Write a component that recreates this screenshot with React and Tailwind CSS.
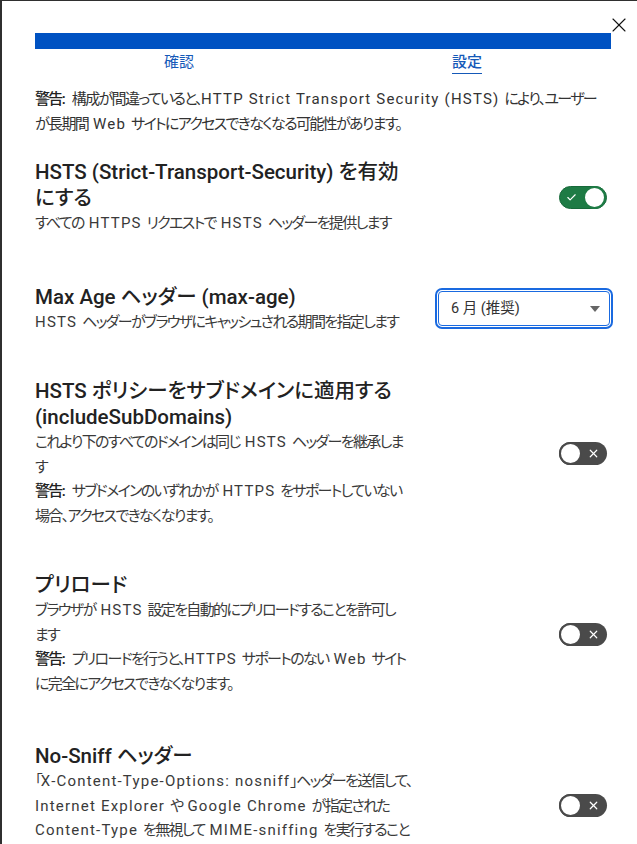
import { Check, X } from "lucide-react";

// splits a string into CJK and latin runs so each can be spaced like the reference font
const cjk = /([\u3000-\u30ff\u3400-\u9fff\uff00-\uffef]+)/;
const J = ({ t }) =>
  t.split(cjk).map((part, i) =>
    part === "" ? null : cjk.test(part) ? (
      <span key={i} className="tracking-[-0.11em]">{part}</span>
    ) : (
      <span key={i} className="tracking-[0.08em]">{part}</span>
    )
  );

const Toggle = ({ on }) =>
  on ? (
    <div className="relative w-[48px] h-[23px] rounded-full bg-[#1e7b45] border border-[#17693a] flex items-center">
      <Check className="ml-[6px] w-[11px] h-[11px] text-white" strokeWidth={2.5} />
      <div className="absolute right-0 top-[-1px] w-[23px] h-[23px] rounded-full bg-white border-2 border-[#1e7b45]" />
    </div>
  ) : (
    <div className="relative w-[48px] h-[23px] rounded-full bg-[#4a4a4a] flex items-center justify-end">
      <X className="mr-[7px] w-[13px] h-[13px] text-white" strokeWidth={2.2} />
      <div className="absolute left-0 top-0 w-[23px] h-[23px] rounded-full bg-white border-2 border-[#4a4a4a]" />
    </div>
  );

const Lines = ({ lines, warn }) => (
  <p>
    {lines.map((l, i) => (
      <span key={i}>
        {i > 0 && <br />}
        {warn && i === 0 && (
          <span className="font-medium text-[#222]">
            <J t="警告: " />
          </span>
        )}
        <J t={l} />
      </span>
    ))}
  </p>
);

const Section = ({ title, children, control, className = "" }) => (
  <div className={"flex items-center justify-between " + className}>
    <div className="w-[380px] whitespace-nowrap">
      <h3 className="text-[20.5px] leading-[26px] font-medium text-[#222]">{title}</h3>
      <div className="text-[15px] leading-[24.5px] text-[#3a3a3a]">{children}</div>
    </div>
    <div className="mr-[4px]">{control}</div>
  </div>
);

export default function App() {
  return (
    <div className="w-[637px] h-[844px] bg-[#2f2f2f] pl-[2px] pt-px overflow-hidden font-['Roboto','Noto_Sans_CJK_JP',sans-serif] [font-feature-settings:'palt']">
      <div className="relative h-full bg-white px-[26px] pl-[33px]">
        <button className="absolute right-[6px] top-[12px] text-[#111]">
          <X className="w-[24px] h-[24px]" strokeWidth={1.1} />
        </button>

        {/* progress */}
        <div className="pt-[32px]">
          <div className="h-[16px] bg-[#0052c2]" />
          <div className="grid grid-cols-2 text-[15px] text-[#1559b8]">
            <div className="text-center leading-[26px]">確認</div>
            <div className="text-center leading-[26px]">
              <span className="font-medium border-b-[1.5px] border-[#1559b8] pb-[2px]">設定</span>
            </div>
          </div>
        </div>

        <div className="mt-[12px] text-[15px] leading-[25px] text-[#333] whitespace-nowrap">
          <Lines
            warn
            lines={[
              "構成が間違っていると、HTTP Strict Transport Security (HSTS) により、ユーザー",
              "が長期間 Web サイトにアクセスできなくなる可能性があります。",
            ]}
          />
        </div>

        <Section
          className="mt-[22px]"
          title={
            <>
              HSTS (Strict-Transport-Security) を有効
              <br />
              にする
            </>
          }
          control={<Toggle on />}
        >
          <Lines lines={["すべての HTTPS リクエストで HSTS ヘッダーを提供します"]} />
        </Section>

        <Section
          className="mt-[48px]"
          title="Max Age ヘッダー (max-age)"
          control={
            <div className="w-[178px] h-[41px] rounded-[7px] border-2 border-[#1a6ae0] p-px mr-[-6px]">
              <div className="h-full rounded-[4px] border border-[#1a6ae0] flex items-center justify-between pl-[12px] pr-[9px] text-[14.5px] text-[#333]">
                <span>6 月 (推奨)</span>
                <span className="w-0 h-0 border-l-[5px] border-r-[5px] border-t-[6px] border-l-transparent border-r-transparent border-t-[#666]" />
              </div>
            </div>
          }
        >
          <Lines lines={["HSTS ヘッダーがブラウザにキャッシュされる期間を指定します"]} />
        </Section>

        <Section
          className="mt-[44px]"
          title={
            <>
              HSTS ポリシーをサブドメインに適用する
              <br />
              (includeSubDomains)
            </>
          }
          control={<Toggle />}
        >
          <Lines lines={["これより下のすべてのドメインは同じ HSTS ヘッダーを継承しま", "す"]} />
          <Lines
            warn
            lines={["サブドメインのいずれかが HTTPS をサポートしていない", "場合、アクセスできなくなります。"]}
          />
        </Section>

        <Section className="mt-[44px]" title="プリロード" control={<Toggle />}>
          <Lines lines={["ブラウザが HSTS 設定を自動的にプリロードすることを許可し", "ます"]} />
          <Lines
            warn
            lines={["プリロードを行うと、HTTPS サポートのない Web サイト", "に完全にアクセスできなくなります。"]}
          />
        </Section>

        <Section className="mt-[47px]" title="No-Sniff ヘッダー" control={<Toggle />}>
          <Lines
            lines={[
              "「X-Content-Type-Options: nosniff」ヘッダーを送信して、",
              "Internet Explorer や Google Chrome が指定された",
              "Content-Type を無視して MIME-sniffing を実行すること",
              "を防ぎます",
            ]}
          />
        </Section>
      </div>
    </div>
  );
}
